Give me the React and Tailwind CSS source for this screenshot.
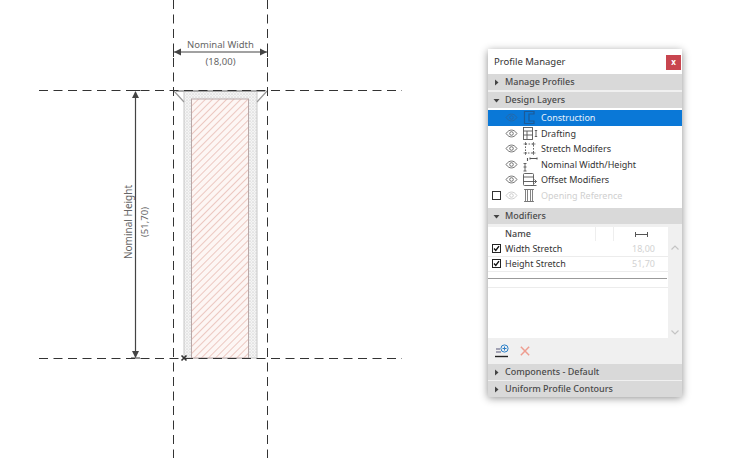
import React from "react";

const font = { fontFamily: '"Noto Sans", "Open Sans", sans-serif' };

function Eye({ c = "#555" }) {
  return (
    <svg width="13" height="9" viewBox="0 0 14 10" fill="none" stroke={c} strokeWidth="0.9">
      <path d="M1 5C3 2 5 1.2 7 1.2S11 2 13 5C11 8 9 8.8 7 8.8S3 8 1 5Z" />
      <circle cx="7" cy="5" r="2" />
    </svg>
  );
}

function LayerIcon({ kind, c }) {
  const s = { fill: "none", stroke: c, strokeWidth: 0.9 };
  return (
    <svg width="16" height="15" viewBox="0 0 16 15" className="shrink-0" {...s}>
      {kind === 0 && <path d="M2.5 1.5H12V4H7V11H12V13.5H2.5Z" strokeWidth="1.2" />}
      {kind === 1 && (
        <>
          <rect x="1.5" y="1.5" width="9" height="12" />
          <path d="M1.5 5H10.5M1.5 9H10.5M5 5V13" />
          <path d="M14 4.5V10.5M12.8 4.5H15.2M12.8 10.5H15.2" />
        </>
      )}
      {kind === 2 && (
        <>
          <rect x="3.5" y="3" width="8" height="9" strokeDasharray="1.6 1.4" />
          <path d="M3.5 1V4M11.5 1V4M3.5 11V14M11.5 11V14M1.5 3H5M10 3H13.5M1.5 12H5M10 12H13.5" strokeWidth="0.7" />
        </>
      )}
      {kind === 3 && (
        <>
          <path d="M3 6.5V14M1.5 6.5H4.5M1.5 14H4.5M1.5 10H4.5" />
          <path d="M8 1.5H15M8 .5V2.5M15 .5V2.5M5.5 1V4" strokeWidth="1.1" />
        </>
      )}
      {kind === 4 && (
        <>
          <rect x="1.5" y="1.5" width="10" height="12" rx="1" />
          <path d="M1.5 5H11.5M1.5 9.5H14.5M12.5 7.5L14.5 9.5L12.5 11.5" />
          <path d="M9 13.5H14.5" />
        </>
      )}
      {kind === 5 && (
        <>
          <rect x="3.5" y="1.5" width="7" height="12" />
          <path d="M5.5 1.5V13.5M8.5 1.5V13.5M2 1.5H12M2 13.5H12" strokeWidth="0.9" />
        </>
      )}
    </svg>
  );
}

function Section({ title, open, className = "" }) {
  return (
    <div className={`h-[16px] bg-[#d9d9d9] flex items-center shrink-0 ${className}`}>
      <div className="w-[17px] flex justify-center">
        {open ? (
          <svg width="7" height="5" viewBox="0 0 7 5"><path d="M0.5 1H6.5L3.5 4.5Z" fill="#444" /></svg>
        ) : (
          <svg width="5" height="7" viewBox="0 0 5 7"><path d="M1 0.5V6.5L4.5 3.5Z" fill="#444" /></svg>
        )}
      </div>
      <span className="text-[9px] font-medium text-[#4a4a4a]">{title}</span>
    </div>
  );
}

const layers = [
  ["Construction", 0],
  ["Drafting", 1],
  ["Stretch Modifers", 2],
  ["Nominal Width/Height", 3],
  ["Offset Modifiers", 4],
  ["Opening Reference", 5],
];

function Layer({ name, kind, index }) {
  const sel = index === 0;
  const off = index === 5;
  return (
    <div className={`h-[15.5px] flex items-center ${sel ? "bg-[#0a78d7]" : ""}`}>
      <div className="w-[14px] flex justify-center pl-[3px]">
        {off && <div className="w-[9px] h-[9px] border border-[#333] bg-white shrink-0" />}
      </div>
      <div className="w-[16px] ml-[1px] flex justify-center">
        <Eye c={sel ? "#2a65a0" : off ? "#c4c4c4" : "#555"} />
      </div>
      <div className="ml-[3px] w-[19px] flex justify-start">
        <LayerIcon kind={kind} c={sel ? "#1c5a98" : off ? "#777" : "#555"} />
      </div>
      <span className={`text-[9px] whitespace-nowrap ${sel ? "text-[#e6f1fb]" : off ? "text-[#cfcfcf]" : "text-[#333]"}`}>
        {name}
      </span>
    </div>
  );
}

function ModRow({ name, value }) {
  return (
    <div className="h-[15.5px] flex items-center border-b border-[#ececec]">
      <div className="w-[15px] flex justify-center">
        <svg width="9" height="9" viewBox="0 0 9 9" className="ml-[1px]">
          <rect x=".5" y=".5" width="8" height="8" fill="#fff" stroke="#222" />
          <path d="M2 4.5L3.8 6.5L7 2.2" fill="none" stroke="#111" strokeWidth="1.4" />
        </svg>
      </div>
      <span className="ml-[2px] w-[127px] text-[9px] text-[#333]">{name}</span>
      <span className="text-[9px] text-[#d2d2d2] w-[22px] text-center">{value}</span>
    </div>
  );
}

function Drawing() {
  const dash = { stroke: "#333", strokeWidth: 1, strokeDasharray: "9 5.5" };
  return (
    <svg width="488" height="458" viewBox="0 0 488 458" className="shrink-0 block" style={font}>
      <defs>
        <pattern id="hatch" width="5" height="5" patternUnits="userSpaceOnUse" patternTransform="rotate(45)">
          <rect width="5" height="5" fill="#fdf6f4" />
          <line x1="0" y1="0" x2="0" y2="5" stroke="#ecc8c1" strokeWidth="2" />
        </pattern>
        <pattern id="dots" width="3" height="3" patternUnits="userSpaceOnUse">
          <rect width="3" height="3" fill="#f4f4f4" />
          <circle cx="1" cy="1" r=".55" fill="#b5b5b5" />
          <circle cx="2.4" cy="2.4" r=".4" fill="#cfcfcf" />
        </pattern>
      </defs>
      <rect x="184" y="91" width="73" height="267" fill="url(#dots)" stroke="#c8c8c8" />
      <rect x="191.5" y="99" width="57" height="259" fill="url(#hatch)" stroke="#b8a8a8" />
      <path d="M174 91L184 102M267 91L257 102" stroke="#999" strokeWidth="1.2" />
      <path d="M176 91H265" stroke="#aaa" strokeWidth="2" />
      <line x1="173.5" y1="0" x2="173.5" y2="458" {...dash} />
      <line x1="267.5" y1="0" x2="267.5" y2="458" {...dash} />
      <line x1="39" y1="90.5" x2="402" y2="90.5" {...dash} />
      <line x1="39" y1="358.5" x2="402" y2="358.5" {...dash} />

      <line x1="174" y1="52" x2="267" y2="52" stroke="#444" strokeWidth="1.2" />
      <path d="M174 52L181 48.5V55.5ZM267 52L260 48.5V55.5Z" fill="#444" />
      <path d="M173.5 47V57M267.5 47V57" stroke="#333" />
      <text x="220.5" y="47.5" textAnchor="middle" fontSize="9.5" fill="#666">Nominal Width</text>
      <text x="220.5" y="65" textAnchor="middle" fontSize="9.5" fill="#666">(18,00)</text>

      <line x1="135.5" y1="92" x2="135.5" y2="357" stroke="#444" strokeWidth="1.2" />
      <path d="M135.5 91L132 98H139ZM135.5 358L132 351H139Z" fill="#444" />
      <path d="M131 358H140M131 90.5H140" stroke="#333" />
      <text transform="translate(132 222) rotate(-90)" textAnchor="middle" fontSize="10" fill="#666">Nominal Height</text>
      <text transform="translate(148 222) rotate(-90)" textAnchor="middle" fontSize="9.5" fill="#666">(51,70)</text>

      <path d="M181.5 355.5L186.5 360.5M186.5 355.5L181.5 360.5" stroke="#333" strokeWidth="1.6" />
    </svg>
  );
}

export default function App() {
  return (
    <div className="w-[736px] h-[458px] bg-white flex overflow-hidden" style={font}>
      <Drawing />
      <div className="w-[194px] h-[347px] mt-[49px] bg-[#f0f0f0] flex flex-col shadow-[0_2px_8px_rgba(0,0,0,0.45)]">
        <div className="h-[25px] bg-white flex items-center justify-between pl-[6px] pr-[1px] pt-[1px] shrink-0">
          <span className="text-[9.5px] text-[#333]">Profile Manager</span>
          <div className="w-[15px] h-[15px] bg-[#c8454f] flex items-center justify-center text-white text-[8px] font-bold leading-none">x</div>
        </div>
        <Section title="Manage Profiles" />
        <Section title="Design Layers" open className="mt-[2px]" />
        <div className="h-[100px] bg-white pt-[2px] shrink-0">
          {layers.map(([n, k], i) => (
            <Layer key={n} name={n} kind={k} index={i} />
          ))}
        </div>
        <Section title="Modifiers" open />
        <div className="h-[114px] flex shrink-0 pt-[3px]">
          <div className="w-[180px] bg-white">
            <div className="h-[14px] flex items-center bg-white">
              <span className="ml-[17px] w-[90px] text-[9px] font-medium text-[#444]">Name</span>
              <div className="h-full w-[19px] border-l border-r border-[#eee]" />
              <div className="w-[54px] flex justify-center">
                <svg width="13" height="5" viewBox="0 0 13 5" stroke="#555" fill="none"><path d="M.5 0V5M12.5 0V5M1 2.5H12" /></svg>
              </div>
            </div>
            <ModRow name="Width Stretch" value="18,00" />
            <ModRow name="Height Stretch" value="51,70" />
            <div className="h-[7px] border-b border-[#9a9a9a] mr-[1px]" />
            <div className="h-[9px] border-b border-[#ececec]" />
          </div>
          <div className="w-[14px] flex flex-col items-center justify-between pt-[18px] pb-[3px]">
            <svg width="8" height="5" viewBox="0 0 8 5" fill="none" stroke="#c4c4c4" strokeWidth="1.2"><path d="M.5 4.5L4 1L7.5 4.5" /></svg>
            <svg width="8" height="5" viewBox="0 0 8 5" fill="none" stroke="#c4c4c4" strokeWidth="1.2"><path d="M.5.5L4 4L7.5.5" /></svg>
          </div>
        </div>
        <div className="h-[26px] flex items-center gap-[11px] pl-[7px] shrink-0">
          <svg width="14" height="14" viewBox="0 0 14 14" fill="none">
            <circle cx="9.5" cy="4.5" r="3.6" stroke="#2a7fc8" />
            <path d="M7.5 4.5H11.5M9.5 2.5V6.5" stroke="#2a7fc8" />
            <path d="M1 5H5M1 8H6" stroke="#557" />
            <path d="M0 12.5H13" stroke="#222" strokeWidth="1.4" />
          </svg>
          <svg width="10" height="10" viewBox="0 0 12 12" stroke="#ee9d90" strokeWidth="1.8"><path d="M1 1L11 11M11 1L1 11" /></svg>
        </div>
        <Section title="Components - Default" />
        <Section title="Uniform Profile Contours" className="mt-[1px]" />
      </div>
    </div>
  );
}
